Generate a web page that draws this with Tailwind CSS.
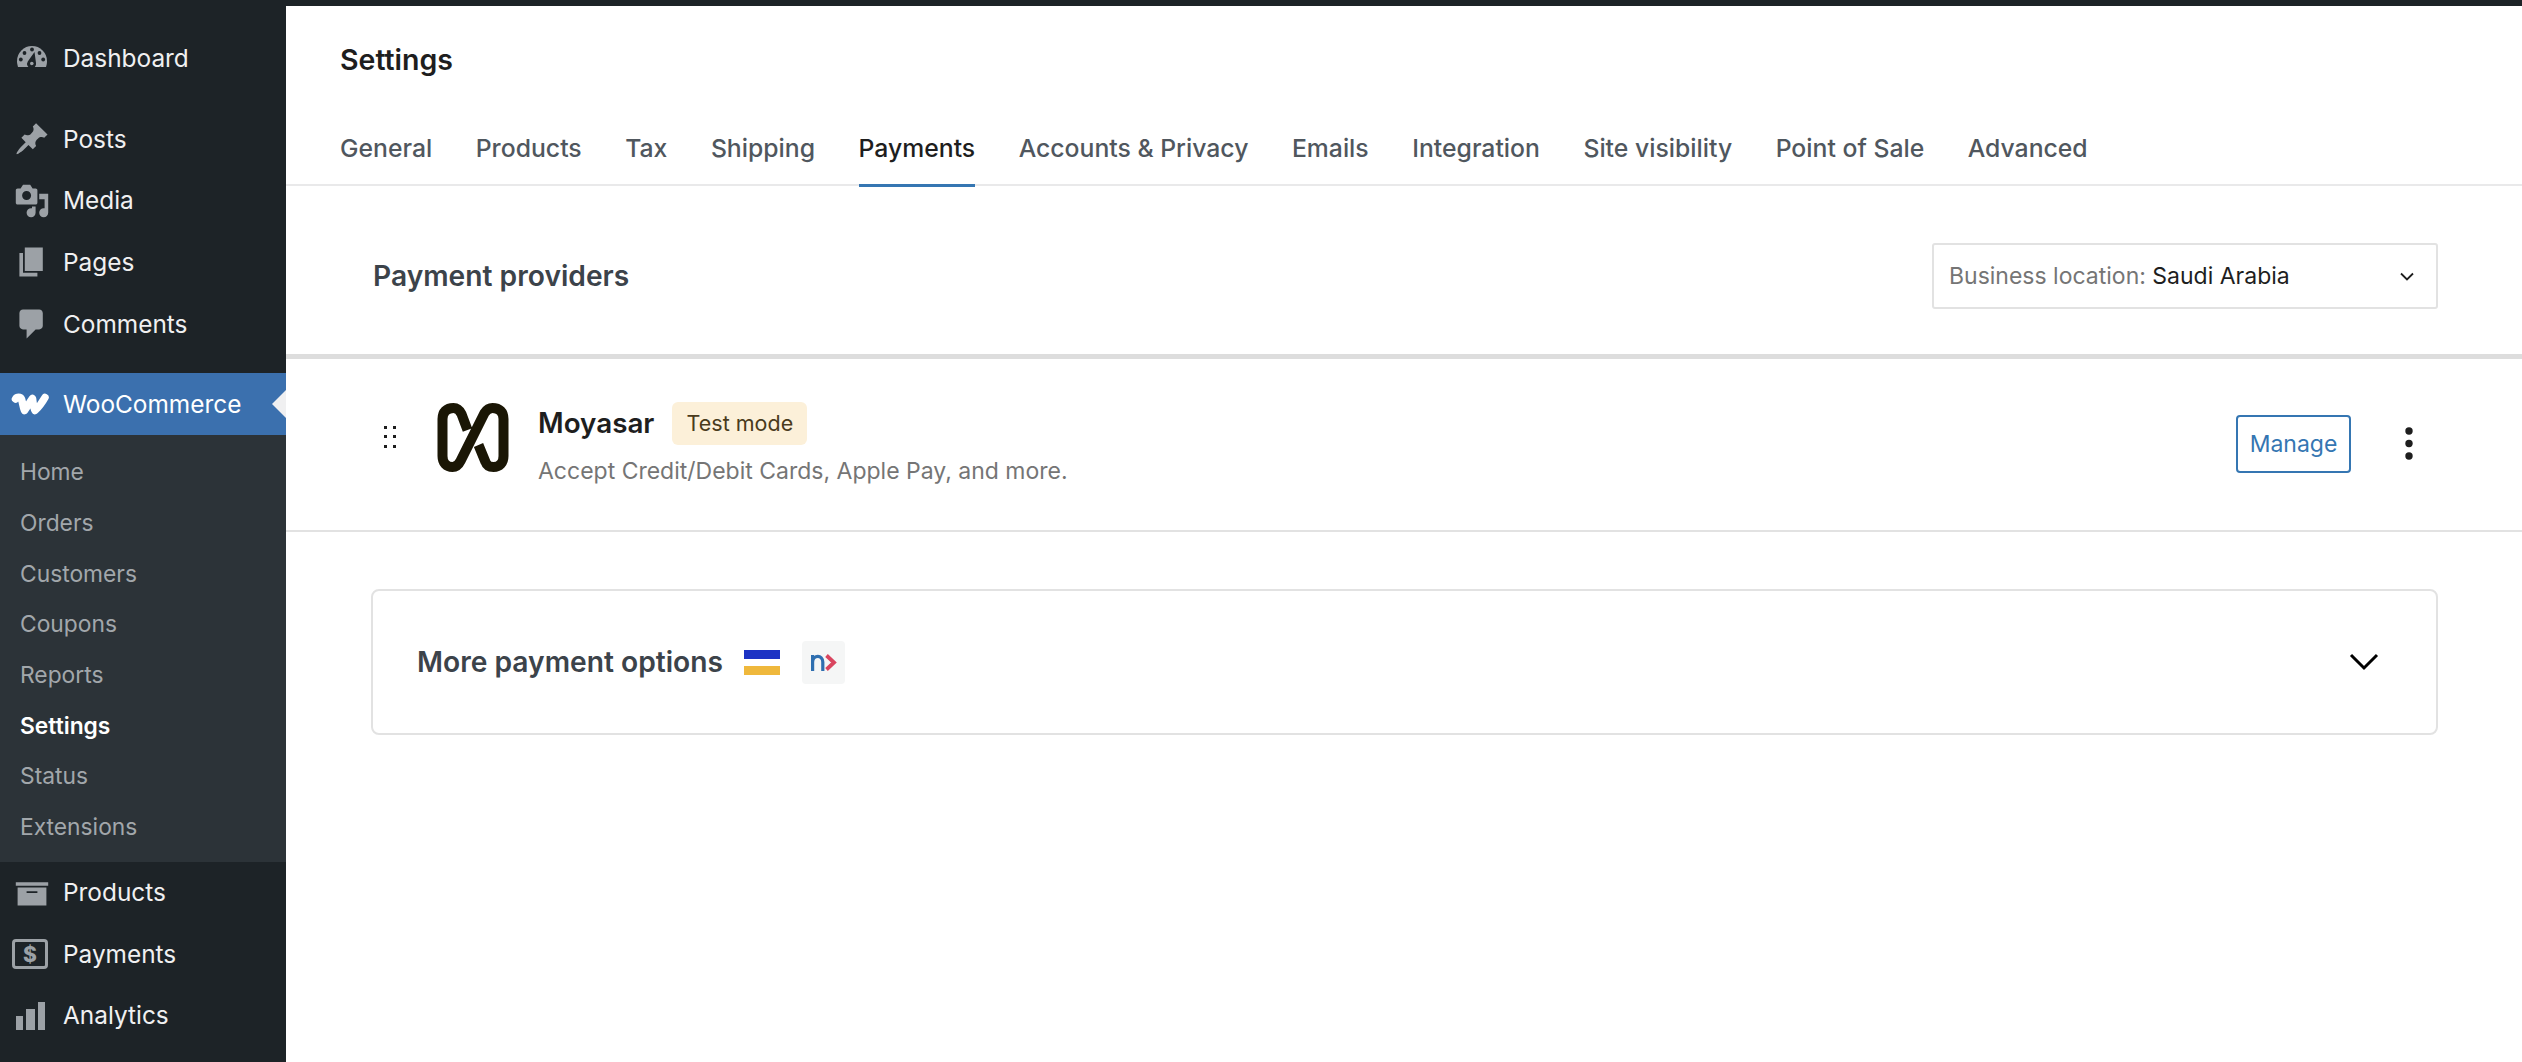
<!DOCTYPE html>
<html lang="en">
<head>
<meta charset="utf-8">
<title>Settings</title>
<script src="https://cdn.jsdelivr.net/npm/@tailwindcss/browser@4"></script>
</head>
<body class="bg-white font-['Inter',sans-serif] overflow-hidden">
<div class="w-[2522px] h-[1062px] overflow-hidden flex flex-col">
  <div class="h-[6px] bg-[#1d2327] shrink-0"></div>
  <div class="flex flex-1 min-h-0">
    <!-- Sidebar -->
    <aside class="w-[286px] shrink-0 bg-[#1d2327] text-[#f0f0f1] text-[24.400px] relative pt-[21px]">
      <a class="flex items-center h-[62px]"><span class="w-[63px] shrink-0 flex justify-center">
        <svg width="36" height="36" viewBox="0 0 36 36"><path fill="#9ca1a6" d="M4 27 C3.200 24 3 22.500 3 21 A15 15 0 0 1 33 21 C33 23 32.800 24.500 32 27 Z"/><g fill="#1d2327"><circle cx="18" cy="9.500" r="1.900"/><circle cx="10.500" cy="13" r="1.900"/><circle cx="25.500" cy="13" r="1.900"/><circle cx="6.800" cy="19.500" r="1.900"/><circle cx="29.200" cy="19.500" r="1.900"/><path d="M20.500 12 L22 23 A4.500 4.500 0 1 1 13.800 21.500 Z"/></g><circle cx="17.800" cy="23.500" r="1.800" fill="#9ca1a6"/></svg></span><span>Dashboard</span></a>
      <div class="h-[19px]"></div>
      <a class="flex items-center h-[62px]"><span class="w-[63px] shrink-0 flex justify-center">
        <svg width="36" height="36" viewBox="0 0 20 20"><path fill="#9ca1a6" d="M10.440 3.020l1.820-1.820 6.360 6.350-1.830 1.820c-1.050-.68-2.480-.57-3.410.36l-.75.75c-.92.93-1.040 2.350-.35 3.410l-1.830 1.820-2.410-2.410-2.800 2.790c-.42.42-3.380 2.710-3.800 2.290s1.860-3.390 2.280-3.810l2.790-2.790L4.100 9.360l1.830-1.820c1.050.69 2.480.57 3.400-.36l.75-.75c.93-.92 1.050-2.350.36-3.410z"/></svg></span><span>Posts</span></a>
      <a class="flex items-center h-[61px]"><span class="w-[63px] shrink-0 flex justify-center">
        <svg width="36" height="36" viewBox="0 0 20 20"><path fill="#9ca1a6" d="M13 11V4c0-.55-.45-1-1-1h-1.670L9 1H5L3.670 3H2c-.55 0-1 .45-1 1v7c0 .55.45 1 1 1h10c.55 0 1-.45 1-1zM7 4.500c1.380 0 2.500 1.120 2.500 2.500S8.380 9.500 7 9.500 4.500 8.380 4.500 7 5.620 4.500 7 4.500zM14 6h5v10.500c0 1.380-1.120 2.500-2.500 2.500S14 17.880 14 16.500s1.120-2.500 2.500-2.500c.17 0 .34.02.5.05V9h-3V6zm-4 8.050V13h2v3.500c0 1.380-1.120 2.500-2.500 2.500S7 17.880 7 16.500 8.120 14 9.500 14c.17 0 .34.02.5.05z"/></svg></span><span>Media</span></a>
      <a class="flex items-center h-[62px]"><span class="w-[63px] shrink-0 flex justify-center">
        <svg width="36" height="36" viewBox="0 0 20 20"><path fill="#9ca1a6" d="M6 15V2h10v13H6zm-1 1h8v2H3V5h2v11z"/></svg></span><span>Pages</span></a>
      <a class="flex items-center h-[62px]"><span class="w-[63px] shrink-0 flex justify-center">
        <svg width="36" height="36" viewBox="0 0 20 20"><path fill="#9ca1a6" d="M5 2h9c1.100 0 2 .9 2 2v7c0 1.100-.9 2-2 2h-2l-5 5v-5H5c-1.100 0-2-.9-2-2V4c0-1.100.9-2 2-2z"/></svg></span><span>Comments</span></a>
      <div class="h-[18px]"></div>
      <a class="flex items-center h-[62px] bg-[#3b70ae] text-white relative"><span class="w-[63px] shrink-0 flex justify-center">
        <svg class="mr-[4px]" width="38" height="22" viewBox="0 0 38 22" fill="none"><path stroke="#fff" stroke-width="7.500" stroke-linecap="round" stroke-linejoin="round" d="M4.500 6 C6 3.800 9.500 3.800 10.500 6 C11.500 9 12 14 13.500 17.500 C16 14 19 9 21.500 5.500 C22 10 22.500 14 24 17.500 C28 14 31.500 9 34 4.500"/></svg></span><span>WooCommerce</span>
        <svg class="absolute right-0 top-[17px]" width="14" height="28" viewBox="0 0 14 28"><path fill="#f0f0f1" d="M14 0 L0 14 L14 28 Z"/></svg>
      </a>
      <ul class="bg-[#2c3338] text-[#a2a7ab] text-[22.800px] pt-[12px] pl-[20px] h-[427px]">
        <li class="h-[50.700px] flex items-center">Home</li>
        <li class="h-[50.700px] flex items-center">Orders</li>
        <li class="h-[50.700px] flex items-center">Customers</li>
        <li class="h-[50.700px] flex items-center">Coupons</li>
        <li class="h-[50.700px] flex items-center">Reports</li>
        <li class="h-[50.700px] flex items-center font-semibold text-white">Settings</li>
        <li class="h-[50.700px] flex items-center">Status</li>
        <li class="h-[50.700px] flex items-center">Extensions</li>
      </ul>
      <a class="flex items-center h-[61.500px]"><span class="w-[63px] shrink-0 flex justify-center">
        <svg width="36" height="36" viewBox="0 0 20 20"><path fill="#9ca1a6" d="M19 4v2H1V4h18zM2 7h16v10H2V7zm11 3V9H7v1h6z"/></svg></span><span>Products</span></a>
      <a class="flex items-center h-[61.500px]"><span class="w-[63px] shrink-0 flex justify-center">
        <svg class="mr-[3px]" width="36" height="30" viewBox="0 0 36 30"><rect x="1.500" y="1.500" width="33" height="27" rx="2.500" fill="none" stroke="#9ca1a6" stroke-width="3"/><text x="18" y="23" text-anchor="middle" font-family="Inter, sans-serif" font-weight="800" font-size="21" fill="#9ca1a6">$</text></svg></span><span>Payments</span></a>
      <a class="flex items-center h-[61.500px]"><span class="w-[63px] shrink-0 flex justify-center">
        <svg class="mr-[2px]" width="29" height="28" viewBox="0 0 29 28"><g fill="#9ca1a6"><rect x="0" y="14" width="7" height="14"/><rect x="10" y="7" width="9" height="21"/><rect x="22" y="0" width="7" height="28"/></g></svg></span><span>Analytics</span></a>
    </aside>

    <!-- Main -->
    <main class="flex-1 min-w-0 flex flex-col">
      <div class="h-[108px] pl-[54px] flex items-center text-[#1e1e1e] text-[28.500px] font-semibold">Settings</div>
      <nav class="h-[72px] pl-[54px] flex gap-[43.500px] border-b-2 border-[#e9e9ea] text-[24.750px] font-medium text-[#50575e]">
        <a class="flex items-center pb-[1px]">General</a>
        <a class="flex items-center pb-[1px]">Products</a>
        <a class="flex items-center pb-[1px]">Tax</a>
        <a class="flex items-center pb-[1px]">Shipping</a>
        <a class="flex items-center pb-[1px] text-[#1e1e1e] border-b-[3px] border-[#3576b2] h-[73px]">Payments</a>
        <a class="flex items-center pb-[1px]">Accounts &amp; Privacy</a>
        <a class="flex items-center pb-[1px]">Emails</a>
        <a class="flex items-center pb-[1px]">Integration</a>
        <a class="flex items-center pb-[1px]">Site visibility</a>
        <a class="flex items-center pb-[1px]">Point of Sale</a>
        <a class="flex items-center pb-[1px]">Advanced</a>
      </nav>

      <section class="h-[173px] pt-[57px] pl-[87px] pr-[84px] flex justify-between items-start border-b-[5px] border-[#dddddd]">
        <h2 class="h-[66px] flex items-center text-[28.200px] font-semibold text-[#3c434a]">Payment providers</h2>
        <div class="w-[506px] h-[66px] border-2 border-[#e2e2e2] rounded-[3px] flex items-center justify-between pl-[15px] pr-[22px] text-[23px] text-[#757575]">
          <span>Business location: <span class="text-[#1e1e1e]">Saudi Arabia</span></span>
          <svg width="14" height="9" viewBox="0 0 14 9" fill="none"><path d="M1 1.500 L7 7.500 L13 1.500" stroke="#1e1e1e" stroke-width="1.800"/></svg>
        </div>
      </section>

      <div class="h-[173px] border-b-2 border-[#e2e2e2] flex items-center pl-[98px]">
        <svg class="mb-[15px] shrink-0" width="12" height="22" viewBox="0 0 12 22" fill="#1e1e1e"><rect x="0" y="0" width="3" height="3"/><rect x="9" y="0" width="3" height="3"/><rect x="0" y="9" width="3" height="3"/><rect x="9" y="9" width="3" height="3"/><rect x="0" y="19" width="3" height="3"/><rect x="9" y="19" width="3" height="3"/></svg>
        <svg class="ml-[41px] mb-[15px] shrink-0" width="72" height="69" viewBox="0 0 71 69" fill="none"><path stroke="#1a1605" stroke-width="10" d="M30 27 L24 11 C22 7 19 5 16 5 C9 5 5 9 5 16 L5 53 C5 60 9 64 15 64 C19 64 21 62 23 58 L47 10 C49 7 52 5 55 5 C62 5 66 9 66 16 L66 53 C66 60 62 64 56 64 C52 64 49 62 48 59 L41 42"/></svg>
        <div class="ml-[29px] flex flex-col mb-[1px]">
          <div class="flex items-center gap-[18px] h-[43px]">
            <span class="text-[27.800px] font-semibold text-[#1e1e1e]">Moyasar</span>
            <span class="w-[135px] h-[43px] rounded-[6px] bg-[#fcf0d9] flex items-center justify-center text-[21.500px] text-[#4a3b1c]">Test mode</span>
          </div>
          <div class="mt-[11px] h-[30px] flex items-center text-[23px] text-[#757575]">Accept Credit/Debit Cards, Apple Pay, and more.</div>
        </div>
        <button class="ml-auto w-[115px] h-[58px] mb-[1px] border-2 border-[#3576b2] rounded-[4px] text-[#3576b2] text-[23px]">Manage</button>
        <div class="w-[116px] mr-[55px] flex justify-center mb-[3px]">
          <svg width="8" height="33" viewBox="0 0 8 33" fill="#1e1e1e"><circle cx="4" cy="4" r="3.700"/><circle cx="4" cy="16.500" r="3.700"/><circle cx="4" cy="29" r="3.700"/></svg>
        </div>
      </div>

      <div class="mt-[57px] ml-[85px] mr-[84px] h-[146px] border-2 border-[#e2e2e2] rounded-[8px] flex items-center pl-[44px] pr-[57px]">
        <span class="text-[28.200px] font-semibold text-[#3c434a]">More payment options</span>
        <svg class="ml-[21px] shrink-0" width="36" height="25" viewBox="0 0 36 25"><rect width="36" height="9" fill="#1c33c4"/><rect y="16" width="36" height="9" fill="#efb83c"/></svg>
        <div class="ml-[22px] w-[43px] h-[43px] rounded-[4px] bg-[#f5f6f6] flex items-center justify-center">
          <svg width="26" height="17" viewBox="0 0 26 17" fill="none"><path stroke="#2f6fb0" stroke-width="3.200" d="M1.600 17 V1 M1.600 8 C2 0.500 11.800 0.500 11.800 8 V17"/><path stroke="#d9455f" stroke-width="3.800" d="M15.500 1.500 L23 8.500 L15.500 15.500"/></svg>
        </div>
        <svg class="ml-auto shrink-0" width="30" height="18" viewBox="0 0 30 18" fill="none"><path stroke="#000" stroke-width="3" d="M2 2 L15 15 L28 2"/></svg>
      </div>
    </main>
  </div>
</div>
</body>
</html>
